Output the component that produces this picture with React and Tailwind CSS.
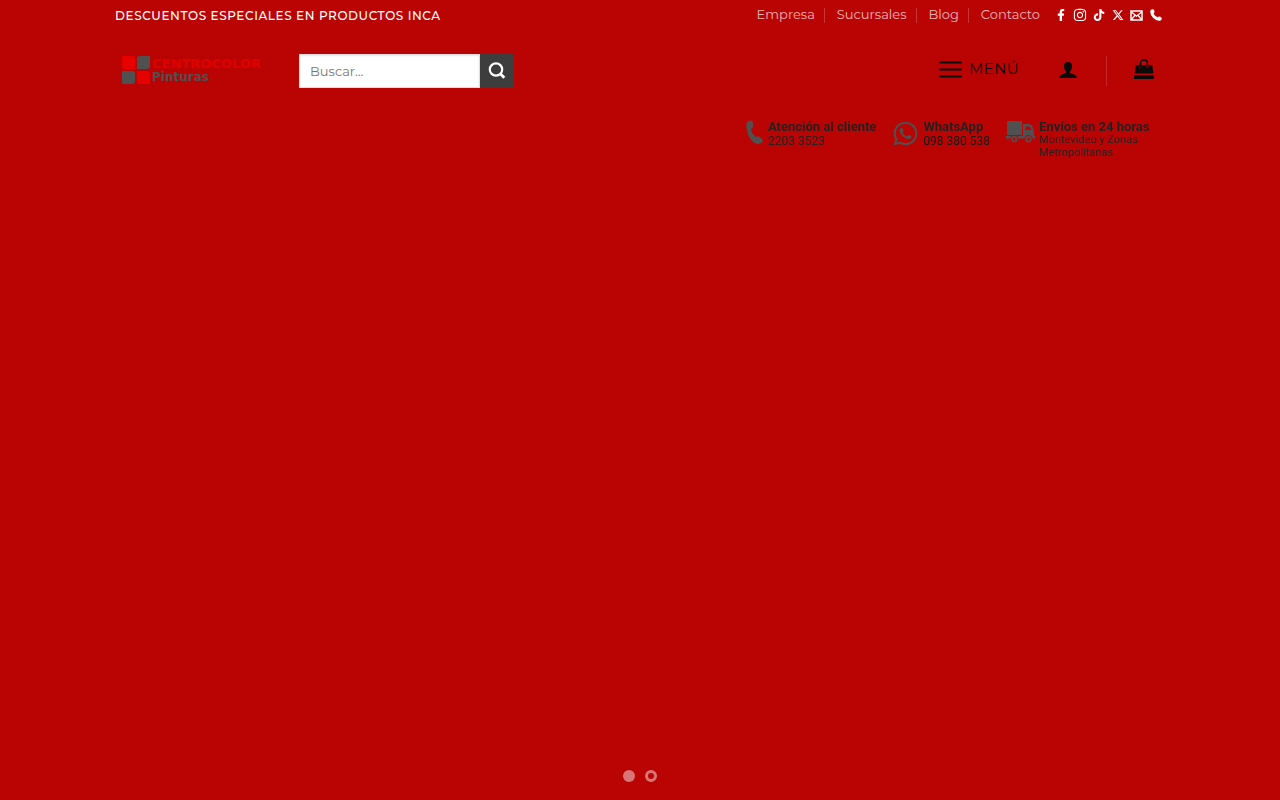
import { FaFacebookF, FaInstagram, FaTiktok, FaWhatsapp } from 'react-icons/fa';
import { FaXTwitter } from 'react-icons/fa6';

const links = ['Empresa', 'Sucursales', 'Blog', 'Contacto'];

function MailIcon() {
  return (
    <svg viewBox="0 0 13 11" className="w-[13px] h-[11px]" fill="none" stroke="currentColor">
      <rect x="1" y="1" width="11" height="9" strokeWidth="1.5" />
      <path d="M1.5 2l5 4.2 5-4.2M1.5 9.5l3.3-4M11.5 9.5l-3.3-4" strokeWidth="1.2" />
    </svg>
  );
}

function CallIcon() {
  return (
    <svg viewBox="0 0 12 12" className="size-3" fill="currentColor">
      <path d="M.6 1.2Q2-.2 3.600.600Q4.800 2 4.400 3.600L3.400 4.600Q4.800 7.200 7.600 8.300L8.800 7.600Q10.400 7.600 11.800 9Q11.800 11 10.200 11.700Q6.500 12.500 2.800 8.600Q-.600 4.600.600 1.200Z" />
    </svg>
  );
}

const socials = [
  { name: 'Facebook', icon: <FaFacebookF className="size-3" /> },
  { name: 'Instagram', icon: <FaInstagram className="size-[14px]" /> },
  { name: 'TikTok', icon: <FaTiktok className="size-3" /> },
  { name: 'X', icon: <FaXTwitter className="size-3" /> },
  { name: 'Email', icon: <MailIcon /> },
  { name: 'Teléfono', icon: <CallIcon /> },
];

function TopBar() {
  return (
    <div className="mx-auto flex h-[30px] max-w-[1050px] items-center justify-between">
      <strong className="pt-[2px] text-[12px] font-medium tracking-wider text-white">DESCUENTOS ESPECIALES EN PRODUCTOS INCA</strong>
      <div className="flex items-center">
        <nav className="flex items-center text-[13px] text-white/70">
          {links.map((link, i) => (
            <div key={link} className="flex items-center">
              {i > 0 && <span className="ml-[9px] mr-3 h-[15px] w-px bg-white/20"></span>}
              <a href="#" className="hover:text-white">{link}</a>
            </div>
          ))}
        </nav>
        <div className="ml-[11px] flex text-white">
          {socials.map((s) => (
            <a key={s.name} href="#" aria-label={s.name} className="flex h-4 w-[19px] items-center justify-center">{s.icon}</a>
          ))}
        </div>
      </div>
    </div>
  );
}

function Logo() {
  return (
    <svg viewBox="0 0 150 30" className="w-[150px] h-[30px]" role="img" aria-label="Centrocolor Pinturas">
      <path d="M1 1H12Q14 1 14 3V14H4Q1 14 1 11Z" fill="#e60000" />
      <path d="M19 1H29V11Q29 14 26 14H16V4Q16 1 19 1Z" fill="#505050" />
      <path d="M1 16H11Q14 16 14 19V26Q14 29 11 29H1Z" fill="#505050" />
      <path d="M16 16H26Q29 16 29 19V29H18Q16 29 16 27Z" fill="#e60000" />
      <text x="31" y="13" fill="#e00000" fontSize="13" fontWeight="700" fontFamily="DejaVu Sans, sans-serif">CENTROCOLOR</text>
      <text x="31" y="26" fill="#505050" fontSize="12" fontWeight="700" fontFamily="DejaVu Sans, sans-serif">Pinturas</text>
    </svg>
  );
}

function Header() {
  return (
    <div className="mx-auto flex h-[82px] max-w-[1050px] items-center justify-between">
      <div className="flex items-center">
        <a href="#" className="ml-[6px] mr-7 pb-[2px]"><Logo /></a>
        <form className="flex" onSubmit={(e) => e.preventDefault()}>
          <input
            type="search"
            aria-label="Buscar"
            placeholder="Buscar…"
            className="h-[34px] w-[181px] border border-[#ddd] bg-white px-[10px] text-[13px] text-[#333] shadow-[inset_0_1px_2px_rgba(0,0,0,0.1)] outline-none placeholder:text-[#777]"
          />
          <button type="submit" aria-label="Enviar" className="flex size-[34px] items-center justify-center bg-[#3d3d3d] text-white">
            <svg viewBox="0 0 18 18" className="size-[18px]" fill="none" stroke="currentColor" strokeWidth="2.2">
              <circle cx="8" cy="7.500" r="6.200" />
              <path d="M12.3 11.800l4 4" strokeWidth="2.800" />
            </svg>
          </button>
        </form>
      </div>
      <div className="mr-[11px] flex items-center text-[#0a0a0a]">
        <button type="button" className="flex items-center gap-[7px] pb-1 text-[15px] tracking-wide">
          <svg viewBox="0 0 24 18" className="w-6 h-[18px]" stroke="currentColor" strokeWidth="2.200" strokeLinecap="round">
            <path d="M2 2.500H23M2 9.500H23M2 16.500H23" />
          </svg>
          MENÚ
        </button>
        <a href="#" aria-label="Mi cuenta" className="ml-10 pb-[2px]">
          <svg viewBox="0 0 18 16" className="w-[18px] h-4" fill="currentColor">
            <path d="M9 0C11.8 0 13 1.5 13 4C13 6.5 12.2 8.5 11 9.5V11C13 12 18 12.5 18 16H0C0 12.5 5 12 7 11V9.5C5.800 8.500 5 6.500 5 4C5 1.500 6.200 0 9 0Z" />
          </svg>
        </a>
        <span className="ml-[29px] mr-[27px] h-[30px] w-px bg-white/15"></span>
        <a href="#" aria-label="Carrito" className="pb-1">
          <svg viewBox="0 0 20 20" className="size-5">
            <path d="M6.500 9V4.500Q6.500 1 10 1T13.500 4.500V9" fill="none" stroke="currentColor" strokeWidth="1.500" />
            <path d="M2 6H18.300L19.300 14.500H.700L1.700 6ZM0 16H20V20H0Z" fill="currentColor" />
            <path d="M5.300 7V8Q6.500 10 7.700 8V7M12.300 7V8Q13.500 10 14.700 8V7" fill="none" stroke="#ba0404" strokeWidth=".5" />
          </svg>
        </a>
      </div>
    </div>
  );
}

function PhoneIcon() {
  return (
    <svg viewBox="0 0 17 24" className="w-[17px] h-6" fill="#505050">
      <path d="M1 2Q4-.500 6 1Q8 4 7 7Q6.500 8.500 4.800 9Q6 14 9.500 17Q11.500 15.500 13.500 17Q16 18.500 17 20.500Q16 24 11.500 24Q6 22.500 2.500 15.500Q-1 7 1 2Z" />
    </svg>
  );
}

function TruckIcon() {
  return (
    <svg viewBox="0 0 29 23" className="w-[29px] h-[23px]" fill="#505050">
      <path d="M1 1H16V15H1Z" />
      <path d="M17 4H22Q26 4 27 8L28 12V16H29V18.500H17ZM19.500 6.500V10H25.500Q24.500 6.500 22 6.500Z" fillRule="evenodd" />
      <path d="M0 16H17V18.500H0Z" />
      <g fill="#ba0404">
        <circle cx="8.300" cy="19" r="4" />
        <circle cx="22.500" cy="19" r="4" />
      </g>
      <g fill="none" stroke="#505050" strokeWidth="1.700">
        <circle cx="8.300" cy="19.200" r="2.300" />
        <circle cx="22.500" cy="19.200" r="2.300" />
      </g>
    </svg>
  );
}

function InfoItem({ icon, title, children }) {
  return (
    <div className="flex items-start gap-1">
      {icon}
      <div>
        <p className="text-[13px] leading-[13px] font-bold">{title}</p>
        {children}
      </div>
    </div>
  );
}

function InfoRow() {
  return (
    <div className="mx-auto flex max-w-[1050px] justify-end gap-4 pt-2 pr-4 font-['Roboto',sans-serif] text-[#2c2020]">
      <InfoItem icon={<PhoneIcon />} title="Atención al cliente">
        <p className="text-[12px] leading-4">2203 3523</p>
      </InfoItem>
      <InfoItem icon={<FaWhatsapp className="size-[27px] text-[#505050]" />} title="WhatsApp">
        <p className="text-[12px] leading-4 text-[#1a1a1a]">098 380 538</p>
      </InfoItem>
      <InfoItem icon={<TruckIcon />} title="Envíos en 24 horas">
        <p className="text-[11px] leading-[13px]">Montevideo y Zonas<br />Metropolitanas</p>
      </InfoItem>
    </div>
  );
}

export default function App() {
  return (
    <div className="flex min-h-screen flex-col bg-[#ba0404] font-['Montserrat','Inter',sans-serif]">
      <header>
        <TopBar />
        <Header />
        <InfoRow />
      </header>
      <main className="flex flex-1 items-end justify-center gap-[10px] pb-[18px]">
        <button type="button" aria-label="Diapositiva 1" className="size-3 rounded-full bg-white/45"></button>
        <button type="button" aria-label="Diapositiva 2" className="size-3 rounded-full border-3 border-white/45"></button>
      </main>
    </div>
  );
}
